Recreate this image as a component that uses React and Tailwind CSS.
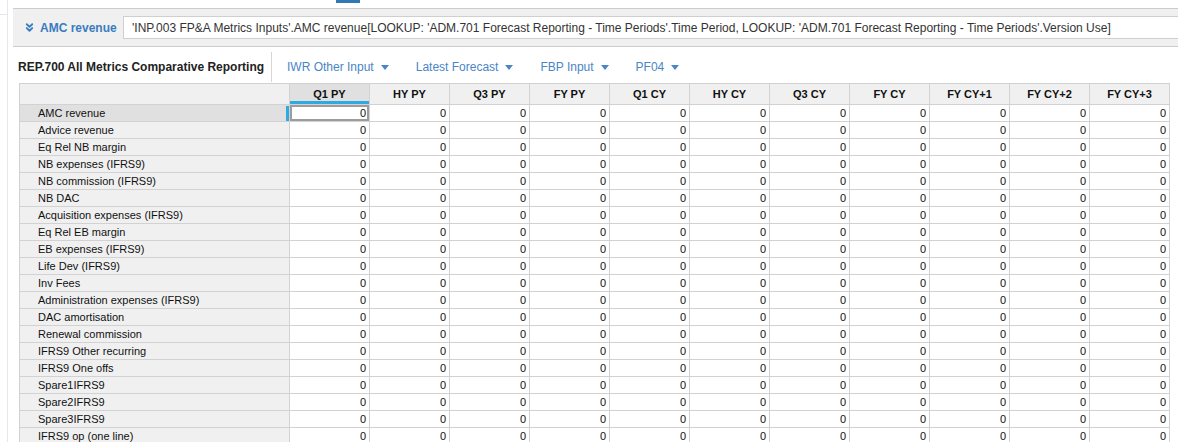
import React from "react";
import { ChevronsDown } from "lucide-react";

const cols = ["Q1 PY", "HY PY", "Q3 PY", "FY PY", "Q1 CY", "HY CY", "Q3 CY", "FY CY", "FY CY+1", "FY CY+2", "FY CY+3"];
const rows = [
  "AMC revenue",
  "Advice revenue",
  "Eq Rel NB margin",
  "NB expenses (IFRS9)",
  "NB commission (IFRS9)",
  "NB DAC",
  "Acquisition expenses (IFRS9)",
  "Eq Rel EB margin",
  "EB expenses (IFRS9)",
  "Life Dev (IFRS9)",
  "Inv Fees",
  "Administration expenses (IFRS9)",
  "DAC amortisation",
  "Renewal commission",
  "IFRS9 Other recurring",
  "IFRS9 One offs",
  "Spare1IFRS9",
  "Spare2IFRS9",
  "Spare3IFRS9",
  "IFRS9 op (one line)",
];

const dropdowns = ["IWR Other Input", "Latest Forecast", "FBP Input", "PF04"];

function Caret() {
  return (
    <svg width="8" height="5" viewBox="0 0 8 5" className="ml-[7px] mt-[1px]">
      <path d="M0 0 L8 0 L4 5 Z" fill="#4a86c5" />
    </svg>
  );
}

export default function App() {
  return (
    <div
      className="w-[1178px] h-[442px] overflow-hidden bg-white flex"
      style={{ fontFamily: '"Liberation Sans", Arial, sans-serif' }}
    >
      {/* left strip */}
      <div className="w-[8px] shrink-0 border-r border-[#e4e8ee] flex flex-col">
        <div className="h-[15px] border-b border-[#e4e8ee]" />
      </div>

      <div className="flex-1 min-w-0 ml-[5px] flex flex-col">
        {/* top tab indicator */}
        <div className="h-[8px] shrink-0">
          <div className="ml-[323px] w-[24px] h-[3px] bg-[#3278b4]" />
        </div>

        {/* formula bar */}
        <div className="h-[39px] shrink-0 border-y border-[#cccccc] bg-[#f0f0f0] flex items-center">
          <div className="w-[110px] shrink-0 flex items-center pl-[10px]">
            <ChevronsDown size={13} strokeWidth={3.4} color="#3a7cc0" />
            <span className="ml-[4px] text-[12px] font-bold text-[#3a7cc0] whitespace-nowrap">AMC revenue</span>
          </div>
          <div className="flex-1 h-[23px] bg-white border border-[#cfcfcf] border-r-0 flex items-center pl-[8px] text-[12px] text-[#333] whitespace-nowrap overflow-hidden">
            'INP.003 FP&amp;A Metrics Inputs'.AMC revenue[LOOKUP: 'ADM.701 Forecast Reporting - Time Periods'.Time Period, LOOKUP: 'ADM.701 Forecast Reporting - Time Periods'.Version Use]
          </div>
        </div>

        {/* title row */}
        <div className="h-[36px] shrink-0 flex items-center pt-[4px]">
          <div className="w-[258px] shrink-0 pl-[5px] text-[12px] font-bold text-[#222] whitespace-nowrap">
            REP.700 All Metrics Comparative Reporting
          </div>
          <div className="w-px h-[30px] bg-[#d6d6d6]" />
          <div className="flex items-center gap-[27px] pl-[15px]">
            {dropdowns.map((d) => (
              <div key={d} className="flex items-center text-[12px] text-[#4a86c5] whitespace-nowrap">
                {d}
                <Caret />
              </div>
            ))}
          </div>
        </div>

        {/* grid */}
        <div className="pl-[6px]">
          <table className="table-fixed border-collapse text-[11px] leading-[15px] text-[#111]">
            <colgroup>
              <col style={{ width: 270 }} />
              {cols.map((c) => (
                <col key={c} style={{ width: 80 }} />
              ))}
            </colgroup>
            <thead>
              <tr className="h-[21px]">
                <th className="border border-[#d2d2d2] bg-[#f0f0f0] p-0" />
                {cols.map((c, i) => (
                  <th
                    key={c}
                    className={
                      i === 0
                        ? "border border-[#d2d2d2] bg-[#e0e0e0] font-bold text-center p-0 shadow-[inset_0_-3px_0_#2fa9e1]"
                        : "border border-[#d2d2d2] bg-[#f0f0f0] font-bold text-center p-0"
                    }
                  >
                    {c}
                  </th>
                ))}
              </tr>
            </thead>
            <tbody>
              {rows.map((r, ri) => (
                <tr key={r} className="h-[17px]">
                  <td
                    className={
                      ri === 0
                        ? "relative border border-[#d2d2d2] bg-[#e0e0e0] pl-[18px] p-0 whitespace-nowrap"
                        : "border border-[#d2d2d2] bg-[#f0f0f0] pl-[18px] p-0 whitespace-nowrap"
                    }
                  >
                    {r}
                    {ri === 0 && (
                      <span className="absolute right-0 top-[1px] w-[3px] h-[15px] bg-[#2fa9e1]" />
                    )}
                  </td>
                  {cols.map((c, ci) => (
                    <td
                      key={c}
                      className={
                        ri === 0 && ci === 0
                          ? "border border-[#d2d2d2] bg-white text-right pr-[3px] p-0 shadow-[inset_0_0_0_2px_#9c9c9c]"
                          : "border border-[#d2d2d2] bg-white text-right pr-[3px] p-0"
                      }
                    >
                      0
                    </td>
                  ))}
                </tr>
              ))}
            </tbody>
          </table>
        </div>
      </div>
    </div>
  );
}
